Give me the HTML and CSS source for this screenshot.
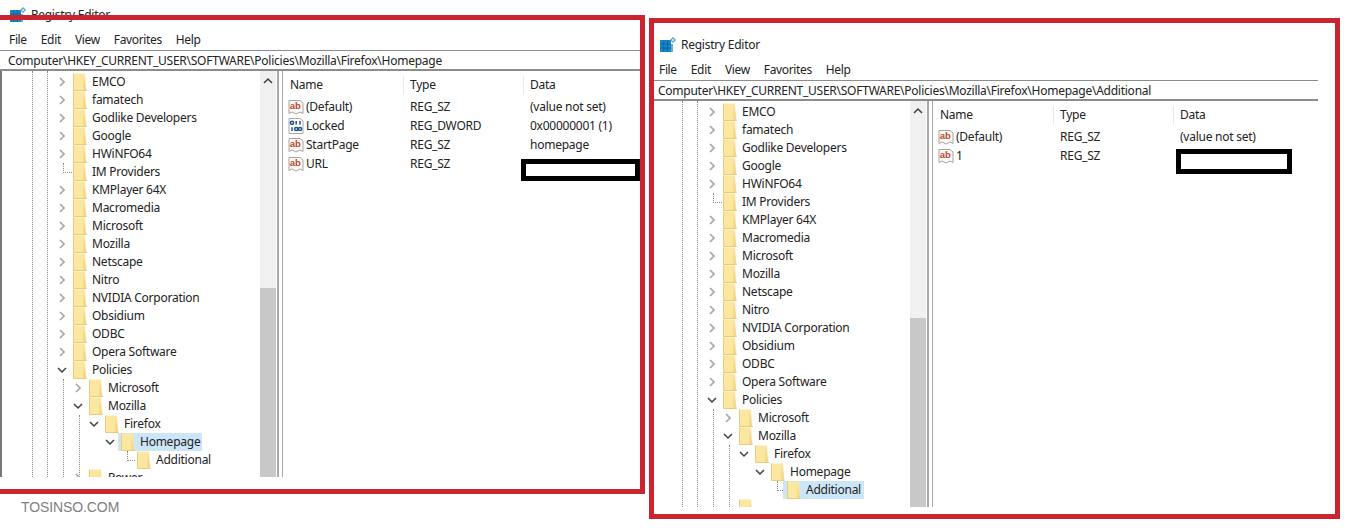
FILE: index.html
```html
<!DOCTYPE html>
<html lang="en">
<head>
<meta charset="utf-8">
<title>Registry Editor</title>
<link rel="stylesheet" href="styles.css">
</head>
<body>
<svg class="defs" width="0" height="0">
  <symbol id="chev-r" viewBox="0 0 10 10"><path d="M3 1l4 4-4 4" fill="none" stroke="#a6a6a6" stroke-width="1.700"/></symbol>
  <symbol id="chev-d" viewBox="0 0 10 10"><path d="M1 3l4 4 4-4" fill="none" stroke="#404040" stroke-width="1.500"/></symbol>
  <symbol id="folder" viewBox="0 0 14 18"><path d="M.5 .5h11.500l1.500 17H.5z" fill="#fce7a0"/><path d="M10.500 2.500l3 15h-3.500z" fill="#f4d888"/><path d="M.5 .5v17h13" fill="none" stroke="#e9cb7c"/></symbol>
  <symbol id="ab" viewBox="0 0 16 16"><path d="M1 1.500h11l3 2.500v10.500l-3-1.500-4 2-4-2-3 1.500z" fill="#fdfaf7" stroke="#aaa39c"/><text x="1.800" y="9.800" class="ab-text">ab</text></symbol>
  <symbol id="bin" viewBox="0 0 16 16"><path d="M1 .5h11l3 2.500v12.500H1z" fill="#fff" stroke="#a8a8a8"/><g fill="none" stroke="#1b4f8c" stroke-width="1.500"><circle cx="4" cy="4.800" r="1.600"/><path d="M8.200 3v3.600M12 3v3.600M4 9.300v3.600"/><circle cx="8.200" cy="11" r="1.600"/><circle cx="12" cy="11" r="1.600"/></g></symbol>
  <symbol id="regedit" viewBox="0 0 16 16"><path d="M0 3h11v12H0z" fill="#1488c8"/><path d="M11 7h2v8h-2z" fill="#5fb0d8"/><path d="M0 7h11M0 11h11M3.700 3v12M7.400 3v12" stroke="#0c5f96" stroke-width=".8"/><path d="M13 0l3 3-3 3-3-3z" fill="#5ba7c4"/><circle cx="13" cy="3" r="1" fill="#e8f5fb"/></symbol>
</svg>

<section class="window win-a">
  <header class="titlebar"><svg class="app-icon"><use href="#regedit"/></svg><span>Registry Editor</span></header>
  <nav class="menu"><span>File</span><span>Edit</span><span>View</span><span>Favorites</span><span>Help</span></nav>
  <div class="address">Computer\HKEY_CURRENT_USER\SOFTWARE\Policies\Mozilla\Firefox\Homepage</div>
  <div class="panes">
    <div class="tree">
      <i class="guide g1"></i><i class="guide g2"></i><i class="guide g3a"></i><i class="guide g3b"></i><i class="guide g4"></i><i class="guide g5"></i>
      <ul class="rows">
        <li class="l0"><svg class="chev"><use href="#chev-r"/></svg><svg class="fold"><use href="#folder"/></svg><span>EMCO</span></li>
        <li class="l0"><svg class="chev"><use href="#chev-r"/></svg><svg class="fold"><use href="#folder"/></svg><span>famatech</span></li>
        <li class="l0"><svg class="chev"><use href="#chev-r"/></svg><svg class="fold"><use href="#folder"/></svg><span>Godlike Developers</span></li>
        <li class="l0"><svg class="chev"><use href="#chev-r"/></svg><svg class="fold"><use href="#folder"/></svg><span>Google</span></li>
        <li class="l0"><svg class="chev"><use href="#chev-r"/></svg><svg class="fold"><use href="#folder"/></svg><span>HWiNFO64</span></li>
        <li class="l0"><svg class="chev"></svg><svg class="fold"><use href="#folder"/></svg><span>IM Providers</span></li>
        <li class="l0"><svg class="chev"><use href="#chev-r"/></svg><svg class="fold"><use href="#folder"/></svg><span>KMPlayer 64X</span></li>
        <li class="l0"><svg class="chev"><use href="#chev-r"/></svg><svg class="fold"><use href="#folder"/></svg><span>Macromedia</span></li>
        <li class="l0"><svg class="chev"><use href="#chev-r"/></svg><svg class="fold"><use href="#folder"/></svg><span>Microsoft</span></li>
        <li class="l0"><svg class="chev"><use href="#chev-r"/></svg><svg class="fold"><use href="#folder"/></svg><span>Mozilla</span></li>
        <li class="l0"><svg class="chev"><use href="#chev-r"/></svg><svg class="fold"><use href="#folder"/></svg><span>Netscape</span></li>
        <li class="l0"><svg class="chev"><use href="#chev-r"/></svg><svg class="fold"><use href="#folder"/></svg><span>Nitro</span></li>
        <li class="l0"><svg class="chev"><use href="#chev-r"/></svg><svg class="fold"><use href="#folder"/></svg><span>NVIDIA Corporation</span></li>
        <li class="l0"><svg class="chev"><use href="#chev-r"/></svg><svg class="fold"><use href="#folder"/></svg><span>Obsidium</span></li>
        <li class="l0"><svg class="chev"><use href="#chev-r"/></svg><svg class="fold"><use href="#folder"/></svg><span>ODBC</span></li>
        <li class="l0"><svg class="chev"><use href="#chev-r"/></svg><svg class="fold"><use href="#folder"/></svg><span>Opera Software</span></li>
        <li class="l0"><svg class="chev"><use href="#chev-d"/></svg><svg class="fold"><use href="#folder"/></svg><span>Policies</span></li>
        <li class="l1"><svg class="chev"><use href="#chev-r"/></svg><svg class="fold"><use href="#folder"/></svg><span>Microsoft</span></li>
        <li class="l1"><svg class="chev"><use href="#chev-d"/></svg><svg class="fold"><use href="#folder"/></svg><span>Mozilla</span></li>
        <li class="l2"><svg class="chev"><use href="#chev-d"/></svg><svg class="fold"><use href="#folder"/></svg><span>Firefox</span></li>
        <li class="l3 sel"><svg class="chev"><use href="#chev-d"/></svg><svg class="fold"><use href="#folder"/></svg><span>Homepage</span></li>
        <li class="l4"><svg class="chev"></svg><svg class="fold"><use href="#folder"/></svg><span>Additional</span></li>
        <li class="l1"><svg class="chev"><use href="#chev-r"/></svg><svg class="fold"><use href="#folder"/></svg><span>Power</span></li>
      </ul>
      <div class="scrollbar"><b class="arrow"><svg class="up"><use href="#chev-d"/></svg></b><b class="thumb"></b></div>
    </div>
    <div class="splitter"></div>
    <div class="list">
      <div class="list-head"><span>Name</span><span>Type</span><span>Data</span></div>
      <div class="list-row"><span class="nm"><svg class="val"><use href="#ab"/></svg>(Default)</span><span>REG_SZ</span><span>(value not set)</span></div>
      <div class="list-row"><span class="nm"><svg class="val"><use href="#bin"/></svg>Locked</span><span>REG_DWORD</span><span>0x00000001 (1)</span></div>
      <div class="list-row"><span class="nm"><svg class="val"><use href="#ab"/></svg>StartPage</span><span>REG_SZ</span><span>homepage</span></div>
      <div class="list-row"><span class="nm"><svg class="val"><use href="#ab"/></svg>URL</span><span>REG_SZ</span><span></span></div>
    </div>
  </div>
</section>

<section class="window win-b">
  <header class="titlebar"><svg class="app-icon"><use href="#regedit"/></svg><span>Registry Editor</span></header>
  <nav class="menu"><span>File</span><span>Edit</span><span>View</span><span>Favorites</span><span>Help</span></nav>
  <div class="address">Computer\HKEY_CURRENT_USER\SOFTWARE\Policies\Mozilla\Firefox\Homepage\Additional</div>
  <div class="panes">
    <div class="tree">
      <i class="guide g1"></i><i class="guide g2"></i><i class="guide g3a"></i><i class="guide g3b"></i><i class="guide g4"></i><i class="guide g5"></i>
      <ul class="rows">
        <li class="l0"><svg class="chev"><use href="#chev-r"/></svg><svg class="fold"><use href="#folder"/></svg><span>EMCO</span></li>
        <li class="l0"><svg class="chev"><use href="#chev-r"/></svg><svg class="fold"><use href="#folder"/></svg><span>famatech</span></li>
        <li class="l0"><svg class="chev"><use href="#chev-r"/></svg><svg class="fold"><use href="#folder"/></svg><span>Godlike Developers</span></li>
        <li class="l0"><svg class="chev"><use href="#chev-r"/></svg><svg class="fold"><use href="#folder"/></svg><span>Google</span></li>
        <li class="l0"><svg class="chev"><use href="#chev-r"/></svg><svg class="fold"><use href="#folder"/></svg><span>HWiNFO64</span></li>
        <li class="l0"><svg class="chev"></svg><svg class="fold"><use href="#folder"/></svg><span>IM Providers</span></li>
        <li class="l0"><svg class="chev"><use href="#chev-r"/></svg><svg class="fold"><use href="#folder"/></svg><span>KMPlayer 64X</span></li>
        <li class="l0"><svg class="chev"><use href="#chev-r"/></svg><svg class="fold"><use href="#folder"/></svg><span>Macromedia</span></li>
        <li class="l0"><svg class="chev"><use href="#chev-r"/></svg><svg class="fold"><use href="#folder"/></svg><span>Microsoft</span></li>
        <li class="l0"><svg class="chev"><use href="#chev-r"/></svg><svg class="fold"><use href="#folder"/></svg><span>Mozilla</span></li>
        <li class="l0"><svg class="chev"><use href="#chev-r"/></svg><svg class="fold"><use href="#folder"/></svg><span>Netscape</span></li>
        <li class="l0"><svg class="chev"><use href="#chev-r"/></svg><svg class="fold"><use href="#folder"/></svg><span>Nitro</span></li>
        <li class="l0"><svg class="chev"><use href="#chev-r"/></svg><svg class="fold"><use href="#folder"/></svg><span>NVIDIA Corporation</span></li>
        <li class="l0"><svg class="chev"><use href="#chev-r"/></svg><svg class="fold"><use href="#folder"/></svg><span>Obsidium</span></li>
        <li class="l0"><svg class="chev"><use href="#chev-r"/></svg><svg class="fold"><use href="#folder"/></svg><span>ODBC</span></li>
        <li class="l0"><svg class="chev"><use href="#chev-r"/></svg><svg class="fold"><use href="#folder"/></svg><span>Opera Software</span></li>
        <li class="l0"><svg class="chev"><use href="#chev-d"/></svg><svg class="fold"><use href="#folder"/></svg><span>Policies</span></li>
        <li class="l1"><svg class="chev"><use href="#chev-r"/></svg><svg class="fold"><use href="#folder"/></svg><span>Microsoft</span></li>
        <li class="l1"><svg class="chev"><use href="#chev-d"/></svg><svg class="fold"><use href="#folder"/></svg><span>Mozilla</span></li>
        <li class="l2"><svg class="chev"><use href="#chev-d"/></svg><svg class="fold"><use href="#folder"/></svg><span>Firefox</span></li>
        <li class="l3"><svg class="chev"><use href="#chev-d"/></svg><svg class="fold"><use href="#folder"/></svg><span>Homepage</span></li>
        <li class="l4 sel"><svg class="chev"></svg><svg class="fold"><use href="#folder"/></svg><span>Additional</span></li>
        <li class="l1"><svg class="chev"></svg><svg class="fold"><use href="#folder"/></svg></li>
      </ul>
      <div class="scrollbar"><b class="arrow"><svg class="up"><use href="#chev-d"/></svg></b><b class="thumb"></b></div>
    </div>
    <div class="splitter"></div>
    <div class="list">
      <div class="list-head"><span>Name</span><span>Type</span><span>Data</span></div>
      <div class="list-row"><span class="nm"><svg class="val"><use href="#ab"/></svg>(Default)</span><span>REG_SZ</span><span>(value not set)</span></div>
      <div class="list-row"><span class="nm"><svg class="val"><use href="#ab"/></svg>1</span><span>REG_SZ</span><span></span></div>
    </div>
  </div>
</section>

<div class="redact redact-a"></div>
<div class="redact redact-b"></div>
<div class="frame frame-a"></div>
<div class="frame frame-b"></div>
<div class="watermark">TOSINSO.COM</div>
</body>
</html>
```
FILE: styles.css
```css
* { box-sizing: border-box; }
html, body { margin: 0; height: 100%; }
body {
  position: relative;
  width: 1350px;
  height: 528px;
  overflow: hidden;
  background: #fff;
  color: #222;
  font: 12px/18px "Noto Sans", "Open Sans", sans-serif;
  letter-spacing: -.25px;
}
.defs { position: absolute; }
.ab-text { font: 700 9.500px "Liberation Sans", sans-serif; fill: #b5482f; letter-spacing: 0; }

.window {
  position: absolute;
  height: 477px;
  display: flex;
  flex-direction: column;
  overflow: hidden;
  background: #fff;
}
.win-a { left: 0; top: 0; width: 640px; }
.win-b { left: 650px; top: 30px; width: 668px; }

.titlebar {
  height: 30px;
  display: flex;
  align-items: center;
  gap: 5px;
  padding-left: 10px;
  flex: none;
}
.app-icon { width: 16px; height: 16px; }
.menu {
  height: 20px;
  flex: none;
  display: flex;
  align-items: center;
  gap: 14px;
  padding-left: 9px;
  letter-spacing: -.35px;
}
.address {
  height: 21px;
  flex: none;
  padding-left: 8px;
  line-height: 19px;
  white-space: nowrap;
  border-top: 1px solid #8c8c8c;
  border-bottom: 2px solid #8c8c8c;
}
.panes { flex: 1; min-height: 0; display: flex; }

.tree {
  position: relative;
  width: 276px;
  flex: none;
  overflow: hidden;
  border-left: 2px solid #777;
}
.rows { list-style: none; margin: 0; padding: 2px 0 0; }
.rows li { height: 18px; display: flex; align-items: center; position: relative; }
.l0 { padding-left: 55px; }
.l1 { padding-left: 71px; }
.l2 { padding-left: 87px; }
.l3 { padding-left: 103px; }
.l4 { padding-left: 119px; }
.chev { width: 10px; height: 10px; flex: none; margin-right: 6px; }
.fold { width: 14px; height: 18px; flex: none; margin-right: 5px; }
.rows li span { padding: 0 2px 0 0; white-space: nowrap; position: relative; }
.sel .fold { position: relative; z-index: 1; }
.sel::before {
  content: "";
  position: absolute;
  top: 0; bottom: 0;
  background: #cde6f7;
}
.l3.sel::before { left: 116px; width: 84px; }
.l4.sel::before { left: 131px; width: 81px; }

.guide { position: absolute; border-left: 1px dotted #8a8a8a; }
.g1 { left: 30px; top: 0; bottom: 0; }
.g2 { left: 45px; top: 0; bottom: 0; }
.g3a { left: 61px; top: 92px; height: 10px; width: 9px; border-bottom: 1px dotted #8a8a8a; }
.g3b { left: 61px; top: 308px; bottom: 0; }
.g4 { left: 77px; top: 344px; bottom: 0; }
.g5 { left: 125px; top: 380px; height: 10px; width: 8px; border-bottom: 1px dotted #8a8a8a; }

.scrollbar {
  position: absolute;
  top: 0; right: 0; bottom: 0;
  width: 16px;
  background: #f0f0f0;
  display: flex;
  flex-direction: column;
}
.arrow { height: 217px; display: block; padding: 5px 3px 0; }
.up { width: 10px; height: 10px; display: block; transform: rotate(180deg); }
.thumb { flex: 1; background: #c8c8c8; display: block; }

.splitter {
  width: 6px;
  flex: none;
  border-left: 2px solid #a8a8a8;
  border-right: 1px solid #a8a8a8;
  margin-left: 1px;
}
.list { flex: 1; min-width: 0; }
.list-head, .list-row {
  display: grid;
  grid-template-columns: 120px 120px 1fr;
  white-space: nowrap;
}
.list-head { height: 24px; padding: 5px 0 0 7px; margin-bottom: 2px; }
.list-head span { border-right: 1px solid #e8e8e8; width: 114px; height: 19px; }
.list-head span:last-child { border-right: 0; }
.list-row { height: 19px; padding-left: 5px; align-items: center; }
.list-row > span:not(.nm) { padding-left: 2px; }
.nm { display: flex; align-items: center; gap: 2px; }
.val { width: 16px; height: 16px; flex: none; }

.redact { position: absolute; background: #fff; border: 5px solid #000; }
.redact-a { left: 521px; top: 159px; width: 119px; height: 22px; }
.redact-b { left: 1176px; top: 149px; width: 116px; height: 25px; }

.frame { position: absolute; border: 5px solid #c9242f; pointer-events: none; }
.frame-a { left: -5px; top: 15px; width: 650px; height: 479px; }
.frame-b { left: 649px; top: 18px; width: 691px; height: 501px; }

.watermark {
  position: absolute;
  left: 21px;
  top: 497px;
  font: 14px/20px "Liberation Sans", Arial, sans-serif;
  color: #808080;
  letter-spacing: -.1px;
}
```
